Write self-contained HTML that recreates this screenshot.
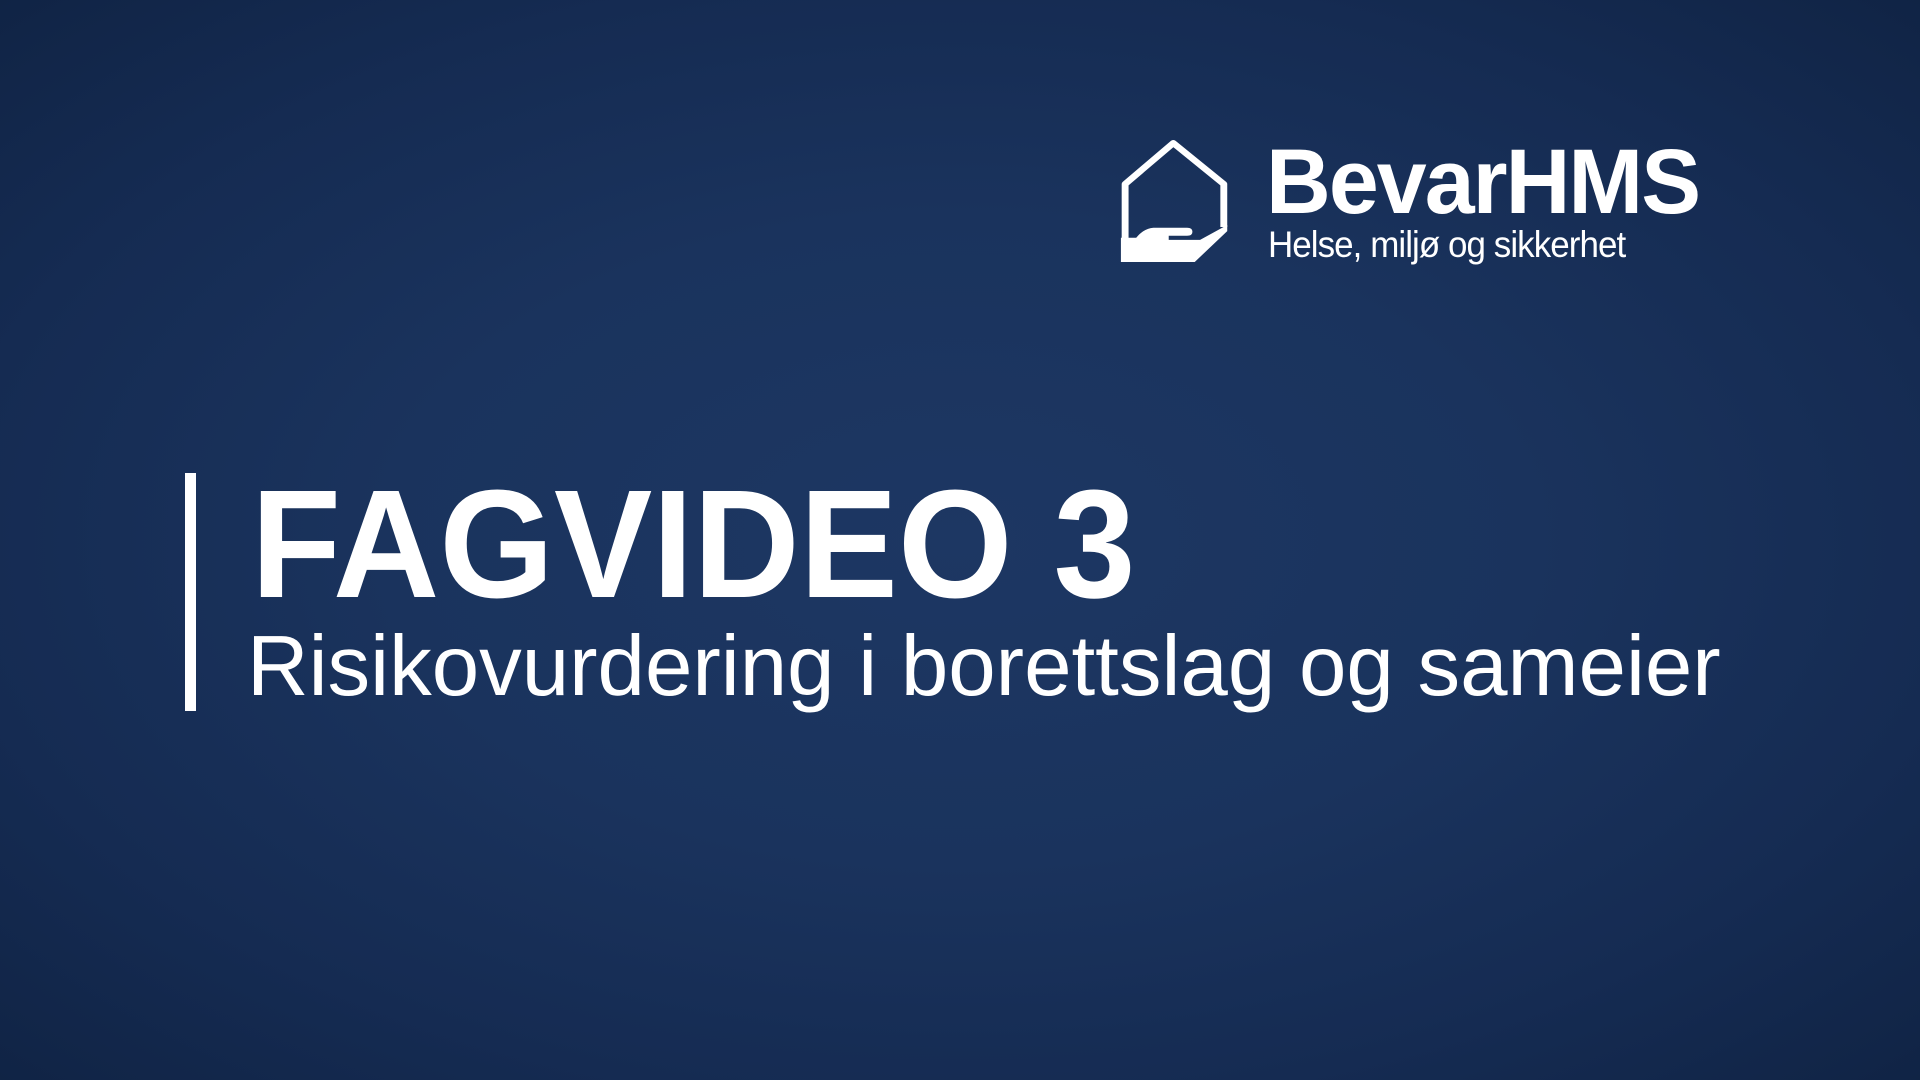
<!DOCTYPE html>
<html><head><meta charset="utf-8"><style>
html,body{margin:0;padding:0}
body{width:1920px;height:1080px;overflow:hidden;position:relative;
background:radial-gradient(ellipse 75% 75% at 50% 50%,#1d3763 0%,#1a335d 40%,#152b52 70%,#0f2242 100%);
font-family:"Liberation Sans",sans-serif;color:#fff}
.t{position:absolute;white-space:nowrap;line-height:1;transform-origin:0 0}
</style></head><body>
<div style="position:absolute;left:185px;top:473px;width:11px;height:238px;background:#fff"></div>
<div class="t" style="left:251px;top:467px;font-size:154px;font-weight:bold;transform:scaleX(0.957)">FAGVIDEO 3</div>
<div class="t" style="left:247px;top:624px;font-size:85px;transform:scaleX(1.003)">Risikovurdering i borettslag og sameier</div>
<div class="t" style="left:1266px;top:136px;font-size:92px;font-weight:bold;letter-spacing:-2px;transform:scaleX(0.975)">BevarHMS</div>
<div class="t" style="left:1268px;top:226px;font-size:37px;letter-spacing:-1px;transform:scaleX(0.945)">Helse, miljø og sikkerhet</div>
<svg style="position:absolute;left:1119px;top:137px" width="109" height="125" viewBox="50 50 285 372" preserveAspectRatio="none">
<path d="M66,360 L66,190 L192,68 L324,190 L324,318" fill="none" stroke="#fff" stroke-width="18" stroke-linejoin="round"/>
<path d="M55,420 L55,350 L95,350 Q115,322 140,320 L228,320 Q242,320 242,332 Q242,344 228,344 L180,344 L180,356 L262,356 L333,312 L333,330 L248,422 L55,422 Z" fill="#fff"/>
</svg>
</body></html>
